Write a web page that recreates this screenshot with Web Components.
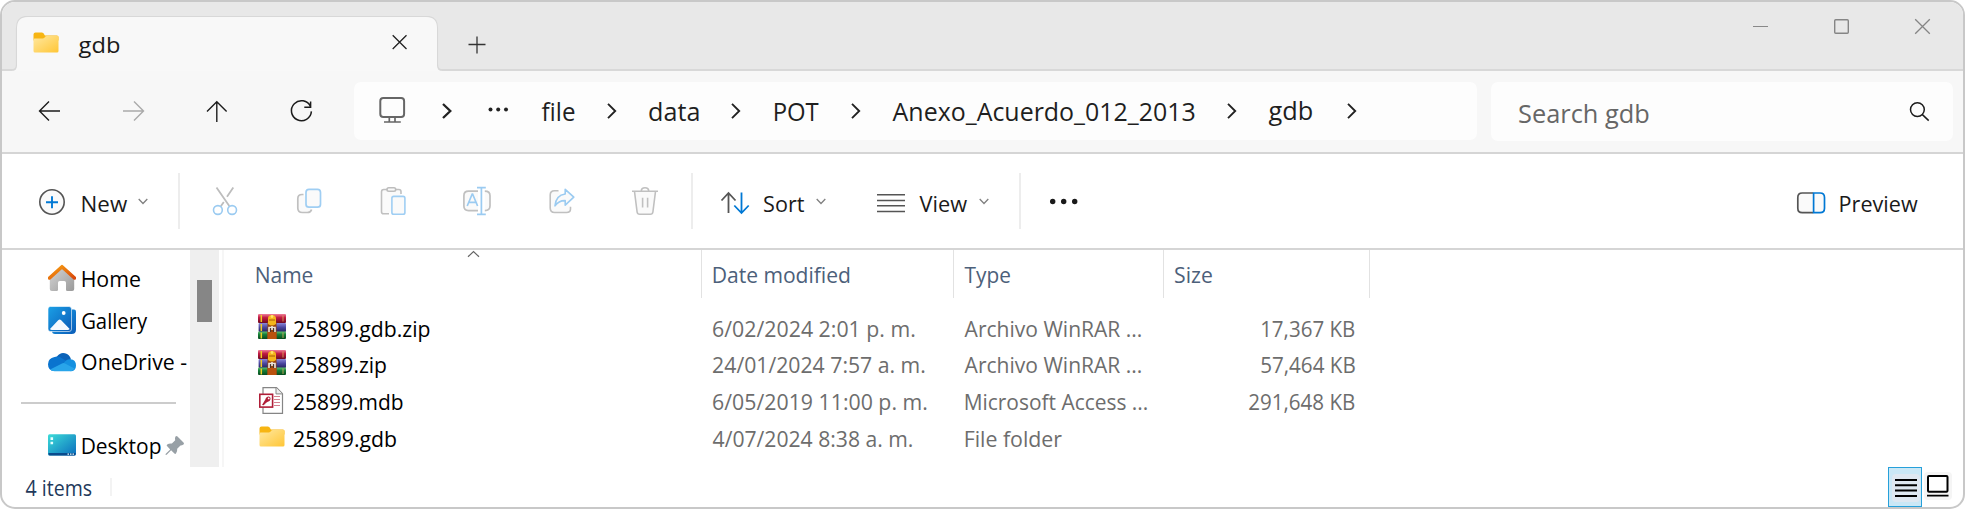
<!DOCTYPE html>
<html lang="en">
<head>
<meta charset="utf-8">
<title>gdb - File Explorer</title>
<style>
  html, body { margin: 0; background: #fff; }
  body { font-family: "Open Sans", "Noto Sans", sans-serif; overflow: hidden; }
</style>
</head>
<body>
<file-explorer></file-explorer>
<script>
const define = (name, css, html, extra) => {
  const tpl = document.createElement('template');
  tpl.innerHTML = `<style>${css}</style>${html}`;
  customElements.define(name, class extends HTMLElement {
    connectedCallback() {
      if (this.shadowRoot) return;
      this.attachShadow({ mode: 'open' }).append(tpl.content.cloneNode(true));
      if (extra) extra.call(this, this.shadowRoot);
    }
  });
};

/* Each icon: viewBox followed by its drawing. */
const folder = (x, y) => `
  <path d="M${x} ${y+2}q0-2 2-2h6.2q1 0 1.8.8l1.4 2.2H${x+23.5}q1.5 0 1.5 1.5V${y+8}H${x}z" fill="#f7b512"/>
  <path d="M${x} ${y+7.2}q0-1.2 1.2-1.2h8q1 0 1.700-.8l1-1.200q.5-.5 1.400-.5H${x+23.800}q1.200 0 1.200 1.200V${y+18.500}q0 1.500-1.500 1.500H${x+1.500}q-1.500 0-1.500-1.500z" fill="url(#f)"/>
  <defs><linearGradient id="f" x1="0" y1="0" x2="1" y2="1"><stop offset="0" stop-color="#ffe8a0"/><stop offset="1" stop-color="#ffc636"/></linearGradient></defs>`;
const ICONS = {
  folder: ['0 0 26 21', folder(.5, .5)],
  tabClose: ['391 35 17 17', '<path d="M392.700 36.200l13.800 13.800M406.500 36.200l-13.800 13.800" stroke="#222" stroke-width="1.300"/>'],
  plus: ['467 35 20 20', '<path d="M468.500 44.500h17M477 36.500v17" stroke="#333" stroke-width="1.300"/>'],
  min: ['1753 18 15 17', '<path d="M1753 26.500h15" stroke="#888" stroke-width="1.200"/>'],
  max: ['1834 18 15 17', '<rect x="1834.700" y="19.700" width="13.600" height="13.600" rx="1" fill="none" stroke="#858585" stroke-width="1.400"/>'],
  close: ['1914 18 17 17', '<path d="M1915.200 19.200l14.600 14.600M1929.800 19.200l-14.600 14.600" stroke="#858585" stroke-width="1.300"/>'],
  back: ['36 82 28 58', '<path d="M60 111H39.700M49 101.500l-9.500 9.500 9.500 9.600" stroke="#1c1c1c" stroke-width="1.400" fill="none"/>'],
  forward: ['120 82 28 58', '<path d="M123 111h20.300M134 101.500l9.500 9.500-9.500 9.600" stroke="#aaa" stroke-width="1.400" fill="none"/>'],
  up: ['203 82 28 58', '<path d="M216.800 122v-20.300M207 111.500l9.800-9.700 9.800 9.700" stroke="#1c1c1c" stroke-width="1.400" fill="none"/>'],
  refresh: ['288 82 28 58', '<path d="M310.500 106.500A10 10 0 1 0 311.400 111.400M310.600 101.400v5.800h-6.300" stroke="#1c1c1c" stroke-width="1.500" fill="none"/>'],
  monitor: ['378 82 28 58', '<g fill="none" stroke="#666" stroke-width="2"><rect x="380.300" y="97.900" width="23.800" height="19.200" rx="3"/><path d="M389.300 117v4.500M395 117v4.500M384 122h16.800" stroke-width="1.700"/></g>'],
  crumbBold: ['0 0 10 16', '<path d="M1 1l7.300 7L1 15" stroke="#222" stroke-width="2.300" fill="none"/>'],
  crumb: ['0 0 10 16', '<path d="M1 .8L8.200 8 1 15.200" stroke="#222" stroke-width="1.900" fill="none"/>'],
  more: ['487 82 22 58', '<g fill="#222"><circle cx="490.500" cy="109.500" r="2"/><circle cx="498.200" cy="109.500" r="2"/><circle cx="506" cy="109.500" r="2"/></g>'],
  search: ['1908 82 24 59', '<g fill="none" stroke="#1c1c1c" stroke-width="1.500"><circle cx="1917.400" cy="109.600" r="6.900"/><path d="M1922.400 114.600l6.300 6"/></g>'],
  add: ['38 181 28 40', '<circle cx="52" cy="202" r="12.200" fill="#fafafa" stroke="#555" stroke-width="1.600"/><path d="M46 202.200h12M52 196.200v12" stroke="#0078d4" stroke-width="1.900"/>'],
  chev: ['0 0 10 7', '<path d="M.7 1l4.300 4.500L9.300 1" stroke="#808080" stroke-width="1.300" fill="none"/>'],
  cut: ['211 181 28 40', '<g fill="none" stroke-width="1.600"><path d="M216.500 187.500L229.300 206M233.300 187.500l-6.300 9.300M223.800 202l-3 4.300" stroke="#bdbdbd" stroke-width="1.800"/><circle cx="217.900" cy="210" r="4.400" stroke="#9bcbf1"/><circle cx="232.100" cy="210" r="4.400" stroke="#9bcbf1"/></g>'],
  copy: ['295 181 28 40', '<g stroke-width="1.700" fill="#fafafa"><path d="M303.500 194.500h-1.500q-4.200 0-4.200 4.200v9.300q0 4.500 4.500 4.500h5q3.500 0 4.300-3" stroke="#c0c0c0"/><rect x="306" y="189.400" width="14.500" height="17.800" rx="3" stroke="#9fcef3"/></g>'],
  paste: ['379 181 28 40', '<g stroke-width="1.600" fill="#fafafa"><path d="M389 213.800h-5.500q-2 0-2-2v-20q0-2.300 2.300-2.300h15q2.200 0 2.200 2.200v2.300" stroke="#c0c0c0"/><rect x="387" y="187.700" width="8.700" height="3.500" rx="1.700" stroke="#bdbdbd"/><rect x="391.900" y="196.400" width="13" height="17.800" rx="1.800" stroke="#9fcef3"/></g>'],
  rename: ['462 181 30 40', '<g stroke-width="1.700" fill="none"><path d="M478 191.200h-9.500q-4.600 0-4.600 4.600v10.200q0 4.600 4.600 4.600h9.500M484.800 191.200q5.200 0 5.200 4.600v10.200q0 4.600-5.200 4.600" stroke="#c0c0c0" fill="#fafafa"/><path d="M467.200 206l5-12h.4l5 12M469 202.300h6.800" stroke="#9bcbf1"/><path d="M477 187.700h8.800M477 214.300h8.800M481.400 187.700v26.600" stroke="#9bcbf1"/></g>'],
  share: ['547 181 30 40', '<g stroke-width="1.600" fill="#fafafa" stroke-linejoin="round"><path d="M558.500 190.700h-4q-4.300 0-4.300 4.300v13q0 4.500 4.500 4.500h11.800q4 0 4-3.500v-2.200" stroke="#c0c0c0"/><path d="M565.200 189.300l8.600 7.900-8.600 7.900v-4.500q-6.500-.2-10.200 5.200 1-10.700 10.200-11.800z" stroke="#9bcbf1"/></g>'],
  trash: ['630 181 30 40', '<g stroke-width="1.600" fill="#fafafa" stroke="#c0c0c0"><path d="M634.500 191.500l2.600 20.500q.3 2.300 2.600 2.300h10.600q2.300 0 2.600-2.300l2.600-20.500"/><path d="M632 191.300h26M641.300 191q0-3.300 3.700-3.300t3.700 3.300M642.600 197.800v9.800M647.600 197.800v9.800" fill="none"/></g>'],
  sort: ['719 181 32 40', '<g stroke-width="1.800" fill="none"><path d="M728.500 213v-20M721.500 200.500l7-7.500 7 7.500" stroke="#555"/><path d="M741.500 192.500v20M734.300 205.500l7.200 7.500 7.200-7.500" stroke="#0078d4"/></g>'],
  view: ['876 181 30 40', '<path d="M877 194.700h28M877 200.500h28M877 205.700h28M877 211.500h28" stroke="#555" stroke-width="1.500"/>'],
  dots: ['1048 181 32 40', '<g fill="#1a1a1a"><circle cx="1052.700" cy="201.500" r="2.700"/><circle cx="1063.700" cy="201.500" r="2.700"/><circle cx="1074.700" cy="201.500" r="2.700"/></g>'],
  preview: ['1795 181 32 40', '<g fill="#fafafa" stroke-width="1.700"><path d="M1813.200 212.700h-11q-4.400 0-4.400-4.400v-10.900q0-4.400 4.400-4.400h11" stroke="#555"/><path d="M1813.600 193h6.500q4.400 0 4.400 4.400v10.900q0 4.400-4.400 4.400h-6.500z" stroke="#0078d4"/></g>'],
  home: ['48 264 28 28', '<defs><linearGradient id="h" x2="1" y2="1"><stop stop-color="#d8d8d8"/><stop offset="1" stop-color="#9a9a9a"/></linearGradient><linearGradient id="r" x2="1" y2="1"><stop stop-color="#f8a012"/><stop offset="1" stop-color="#d9480b"/></linearGradient></defs><path d="M49.800 276l12.200-10.500 12.200 10.500v13q0 2-2 2h-5q-1.200 0-1.200-1.200v-7q0-1.800-1.800-1.800h-4.400q-1.800 0-1.800 1.800v7q0 1.200-1.200 1.200h-5q-2 0-2-2z" fill="url(#h)"/><path d="M49.500 278L62 266.700 74.500 278" fill="none" stroke="url(#r)" stroke-width="3.500" stroke-linecap="round" stroke-linejoin="round"/>'],
  gallery: ['48 305.500 28 28', '<defs><linearGradient id="g" x2="1" y2="1"><stop stop-color="#1ba0e6"/><stop offset="1" stop-color="#0a5cb8"/></linearGradient></defs><path d="M70 309h4q2 0 2 2v18q0 4.500-4.500 4.500H55q-3 0-3-3z" fill="url(#g)"/><rect x="48" y="306" width="23.500" height="25" rx="2.500" fill="url(#g)" stroke="#fff" stroke-width=".6"/><path d="M50 328.500l8.200-8.800q1.500-1.600 3 0l8.500 8.800q-.7 1-2 1H52q-1.500 0-2-1z" fill="#f4faff"/><circle cx="63.700" cy="312.500" r="1.900" fill="#fff"/>'],
  onedrive: ['48 346.500 28 28', '<path d="M57 355q3.200-4.500 8-3.300 4.500 1 6 6l-6 5-12-4z" fill="#0b62b8"/><path d="M54.500 355.500q4-1.200 7 1l8 5-14 8h-1.500q-6-.5-6-6.800 0-6 6.500-7.200z" fill="#0a74cf"/><path d="M63 363q2.500-5.500 7.500-5.300 5.500.6 5.500 6.200 0 5.600-5.500 5.900z" fill="#1590e0"/><path d="M50 368l12-6q1.500-.8 3 .1l9.500 5q-1.500 2.700-4.500 2.700H54.500q-3 0-4.500-1.800z" fill="#29a5ea"/>'],
  desktop: ['48 431 28 28', '<defs><linearGradient id="d" x2="1" y2="1"><stop stop-color="#3cdcd8"/><stop offset="1" stop-color="#0b6dbd"/></linearGradient></defs><rect x="48" y="434.300" width="28" height="21.300" rx="1.500" fill="url(#d)"/><path d="M48.500 453h27v1q0 1.500-1.500 1.500H50q-1.500 0-1.500-1.500z" fill="#0a4b8c"/><path d="M50.500 437.300h2.600v2.600h-2.600zM50.500 441.700h2.600v2.600h-2.600zM67.500 453.500h1.500v1.300h-1.500zM70 453.500h1.500v1.300H70zM72.500 453.500h1.500v1.300h-1.500z" fill="#e6ffff"/>'],
  pin: ['165 435 20 21', '<path d="M175.500 436.500q1-1 2 0l6 6q1 1 0 2-1.500 1-3 1l-3.300 3.300q.3 3-1.200 4.800-.8.800-1.600 0l-3.300-3.300-4.400 4.400-1.200.3.300-1.200 4.400-4.400-3.200-3.300q-.8-.8.200-1.500 1.700-1.400 4.700-1.100l3.300-3.300q-.7-2.300.3-3.700z" fill="#98a0a6"/>'],
  sortCaret: ['0 0 13 8', '<path d="M1 6.800l5.500-5.300L12 6.800" stroke="#666" stroke-width="1.200" fill="none"/>'],
  rar: ['0 0 28 25', `<defs><linearGradient id="a" x2="0" y2="1"><stop stop-color="#f0809a"/><stop offset=".4" stop-color="#c11a42"/><stop offset="1" stop-color="#6e0a20"/></linearGradient><linearGradient id="b" x2="0" y2="1"><stop stop-color="#8a86d8"/><stop offset=".5" stop-color="#4a469e"/><stop offset="1" stop-color="#25225e"/></linearGradient><linearGradient id="c" x2="0" y2="1"><stop stop-color="#5fc070"/><stop offset=".4" stop-color="#17803a"/><stop offset="1" stop-color="#064a1c"/></linearGradient></defs>
    <rect width="28" height="9" rx="1" fill="url(#a)"/><rect x=".6" y="9" width="27.400" height="9" rx="1" fill="url(#b)"/><rect y="17.500" width="28" height="7.500" rx="1" fill="url(#c)"/>
    <path d="M3.300 1v7M3.300 10v7M3.300 18.500v6" stroke="#f0cc25" stroke-width="1.500"/><path d="M25 1.500v6M25 18.500v5.500" stroke="#e0b060" stroke-width=".8"/>
    <rect x="9.500" y="8" width="9" height="17" fill="#96420f"/><rect x="9.500" y="18" width="9" height="7" fill="#b9520f"/><path d="M10 10V4.500q0-3.500 4-3.500t4 3.500V10q-4 3-8 0z" fill="#f5b51c"/><circle cx="14" cy="2.500" r="1.400" fill="#ffe169"/><path d="M11 6h6" stroke="#a85a08" stroke-width="1"/><path d="M11 18v-4.500h6V18M14 12v4" stroke="#e9e4e0" stroke-width="1.600" fill="none"/><path d="M12.500 14v4M15.500 14v4" stroke="#333" stroke-width=".8"/>`],
  mdb: ['0 0 25 27', '<path d="M4 .7h13.500l6 6v19.600H4z" fill="#fff" stroke="#858585" stroke-width="1.200"/><path d="M17 .7v6.200h6.500" fill="#eee" stroke="#858585" stroke-width="1"/><path d="M15 9.500h6M15 12.500h6M15 15.500h6M15 18.500h6" stroke="#d4808e" stroke-width="1.100"/><rect x=".8" y="7.300" width="12.800" height="12.800" fill="#fff" stroke="#b01e38" stroke-width="1.600"/><path d="M3 18l3.200-5.200q.3-2.600 2.800-3.300 2.800-.2 2.500 2.700-.6 2.700-3.200 2.800l-1 .8-.7.3-.4 1.200-1.100.2-.3.700z" fill="#b01e38"/><circle cx="9.700" cy="11.400" r=".9" fill="#fff"/>'],
  details: ['1888 467 34 40', '<rect x="1892" y="474" width="28" height="28" rx="4" fill="#dfe8f1"/><path d="M1895 480h22M1895 485.200h22M1895 490.500h22M1895 496h22" stroke="#000" stroke-width="1.900"/>'],
  thumbs: ['1922 467 32 40', '<rect x="1924" y="472" width="28" height="28" rx="4" fill="#f5f5f5"/><rect x="1928" y="476" width="19.500" height="15.700" rx="1" fill="#fff" stroke="#000" stroke-width="2"/><path d="M1927 495.600h21.500" stroke="#000" stroke-width="1.800"/>'],
};

define('ui-icon', ':host{display:block;flex:none;line-height:0} svg{display:block}', '<svg xmlns="http://www.w3.org/2000/svg"></svg>', function (root) {
  const [box, body] = ICONS[this.getAttribute('name')];
  const [, , w, h] = box.split(' ');
  const svg = root.querySelector('svg');
  svg.setAttribute('viewBox', box);
  svg.setAttribute('width', w);
  svg.setAttribute('height', h);
  svg.innerHTML = body;
  this.style.marginLeft = (this.getAttribute('gap') || 0) + 'px';
});

/* One line of text whose glyphs span `w` pixels. */
const pen = document.createElement('canvas').getContext('2d');
define('ui-text', `
  :host{display:block;flex:none;height:32px;line-height:32px;white-space:pre}
  span{display:inline-block;transform-origin:0 50%}`, '<span><slot></slot></span>', function (root) {
  const size = +(this.getAttribute('size') || 22), w = +this.getAttribute('w');
  const weight = this.getAttribute('weight') || 400;
  pen.font = `${weight} ${size}px "Open Sans"`;
  const m = pen.measureText(this.textContent);
  const k = w / (m.actualBoundingBoxRight + m.actualBoundingBoxLeft);
  Object.assign(this.style, { fontSize: size + 'px', fontWeight: weight, width: w + 'px', marginLeft: (this.getAttribute('gap') || 0) + 'px' });
  root.querySelector('span').style.transform =
    `translate(${m.actualBoundingBoxLeft * k * .5 - .4}px, ${this.getAttribute('dy') || 0}px) scaleX(${k})`;
});

define('ui-rule', ':host{display:block;flex:none;width:2px;height:56px;background:#ededed}', '', function () {
  this.style.marginLeft = this.getAttribute('gap') + 'px';
});

define('title-bar', `
  :host{display:flex;box-sizing:border-box;height:69px;background:#e8e8e8;border-bottom:2px solid #d8d8d8;position:relative;color:#1a1a1a}
  .shape{position:absolute;left:0;top:14px}
  .tab{position:relative;display:flex;align-items:center;box-sizing:border-box;width:421px;height:53px;margin:14px 0 0 15px;padding-left:16px}
  .tab ui-icon{margin-top:-1px}
  .new{padding-top:33px;margin-left:29px}
  .win{display:flex;margin-left:auto;padding:16px 32px 0 0}`, `
  <svg class="shape" width="450" height="55" viewBox="2 16 450 55"><path d="M2 70.100h9q5.700 0 5.700-5.700V28q0-11.500 11.500-11.500h397.600q11.500 0 11.500 11.500v36.400q0 5.700 5.700 5.700H452" fill="none" stroke="#d8d8d8" stroke-width="1.600"/><path d="M2 71h9.500q5.500 0 5.500-5.500V28q0-11 11-11h398q11 0 11 11v37.500q0 5.500 5.500 5.500z" fill="#f8f8f8"/></svg>
  <div class="tab"><ui-icon name="folder"></ui-icon><ui-text w="41" gap="19.500" size="22.500" weight="500" dy="2">gdb</ui-text><ui-icon name="tabClose" gap="271.500"></ui-icon></div>
  <div class="new"><ui-icon name="plus"></ui-icon></div>
  <div class="win"><ui-icon name="min"></ui-icon><ui-icon name="max" gap="66"></ui-icon><ui-icon name="close" gap="65"></ui-icon></div>`);

define('nav-bar', `
  :host{display:flex;box-sizing:border-box;height:83px;padding:11px 10px 0 34px;background:#f7f7f7;border-bottom:2px solid #d5d5d5;color:#1f1f1f}
  .box{display:flex;align-items:center;box-sizing:border-box;background:#fdfdfd;border-radius:7px}
  .path{width:1123px;height:58px;margin-left:38px;padding-left:24px}
  .find{width:462px;height:59px;margin-left:14px;padding-left:28px;color:#666}`, `
  <ui-icon name="back"></ui-icon><ui-icon name="forward" gap="56"></ui-icon><ui-icon name="up" gap="55"></ui-icon><ui-icon name="refresh" gap="57"></ui-icon>
  <div class="box path">
    <ui-icon name="monitor"></ui-icon><ui-icon name="crumbBold" gap="36"></ui-icon><ui-icon name="more" gap="35"></ui-icon>
    <ui-text size="24.800" gap="33" w="33">file</ui-text><ui-icon name="crumb" gap="32"></ui-icon>
    <ui-text size="24.800" gap="32" w="49.500">data</ui-text><ui-icon name="crumb" gap="32.500"></ui-icon>
    <ui-text size="24.800" gap="32.500" w="44.500">POT</ui-text><ui-icon name="crumb" gap="33"></ui-icon>
    <ui-text size="24.800" gap="31.500" w="302">Anexo_Acuerdo_012_2013</ui-text><ui-icon name="crumb" gap="32.500"></ui-icon>
    <ui-text size="24.800" gap="32" w="43.500" dy="-0.700">gdb</ui-text><ui-icon name="crumb" gap="34.500"></ui-icon>
  </div>
  <div class="box find"><ui-text size="24.800" w="129.500" dy="0.500">Search gdb</ui-text><ui-icon name="search" gap="259.500"></ui-icon></div>`);

define('command-bar', `
  :host{display:flex;align-items:center;box-sizing:border-box;height:96px;padding-left:36px;background:#fff;border-bottom:2px solid #d5d5d5;color:#1a1a1a}
  .end{display:flex;align-items:center;margin-left:auto;padding-right:46px}`, `
  <ui-icon name="add"></ui-icon><ui-text gap="16" w="44.500" dy="2">New</ui-text><ui-icon name="chev" gap="11.500"></ui-icon>
  <ui-rule gap="30"></ui-rule>
  <ui-icon name="cut" gap="31"></ui-icon><ui-icon name="copy" gap="56"></ui-icon><ui-icon name="paste" gap="56"></ui-icon><ui-icon name="rename" gap="55"></ui-icon><ui-icon name="share" gap="55"></ui-icon><ui-icon name="trash" gap="53"></ui-icon>
  <ui-rule gap="31"></ui-rule>
  <ui-icon name="sort" gap="26"></ui-icon><ui-text gap="12.500" w="40.500" dy="2">Sort</ui-text><ui-icon name="chev" gap="12"></ui-icon>
  <ui-icon name="view" gap="50"></ui-icon><ui-text gap="13.500" w="47.500" dy="2">View</ui-text><ui-icon name="chev" gap="12"></ui-icon>
  <ui-rule gap="30"></ui-rule>
  <ui-icon name="dots" gap="27"></ui-icon>
  <div class="end"><ui-icon name="preview"></ui-icon><ui-text gap="13" w="77" dy="2">Preview</ui-text></div>`);

define('side-bar', `
  :host{display:flex;flex:none;width:222px;color:#000}
  .items{width:188px;padding-top:7px;box-sizing:border-box}
  .row{display:flex;align-items:center;height:42px;padding-left:46px}
  .line{height:2px;margin:20px 14px 20px 18.500px;background:#ccc}
  .track{width:29px;background:#efefef;padding-top:30px;box-sizing:border-box}
  .thumb{width:15px;height:41.500px;margin:0 7px;background:#868686}`, `
  <div class="items">
    <div class="row"><ui-icon name="home"></ui-icon><ui-text gap="6" w="58">Home</ui-text></div>
    <div class="row"><ui-icon name="gallery"></ui-icon><ui-text gap="6" w="66">Gallery</ui-text></div>
    <div class="row" style="height:41px"><ui-icon name="onedrive"></ui-icon><ui-text gap="6" w="105" dy="-1">OneDrive -</ui-text></div>
    <div class="line"></div>
    <div class="row"><ui-icon name="desktop"></ui-icon><ui-text gap="6" w="78.500">Desktop</ui-text><ui-icon name="pin" gap="4.500"></ui-icon></div>
  </div>
  <div class="track"><div class="thumb"></div></div>`);

define('file-row', `
  :host{display:grid;grid-template-columns:478px 252px 210px 206px;height:36.670px;color:#6d6d6d}
  div{display:flex;align-items:center}
  .name{color:#000;padding-left:34px}
  .ico{width:35.500px}
  .date{padding-left:10.500px}.type{padding-left:10.500px}
  .size{justify-content:flex-end;padding-right:15px}`, `
  <div class="name"><div class="ico"><slot name="icon"></slot></div><slot name="name"></slot></div>
  <div class="date"><slot name="date"></slot></div><div class="type"><slot name="type"></slot></div><div class="size"><slot name="size"></slot></div>`);

define('file-list', `
  :host{display:block;flex:1;border-left:2px solid #f6f6f6}
  .head{display:grid;grid-template-columns:478px 252px 210px 206px;height:48px;margin-bottom:12px;color:#4c607a}
  .head div{display:flex;align-items:center;position:relative;border-right:1px solid #e2e2e2;padding-left:11px}
  .head .first{padding-left:32px}
  .caret{position:absolute;left:243px;top:0}`, `
  <div class="head">
    <div class="first"><ui-text w="56.500">Name</ui-text><ui-icon class="caret" name="sortCaret"></ui-icon></div>
    <div><ui-text w="136">Date modified</ui-text></div><div><ui-text w="46">Type</ui-text></div><div><ui-text w="37.500">Size</ui-text></div>
  </div>
  <file-row><ui-icon slot="icon" name="rar" style="margin-top:-4px"></ui-icon><ui-text slot="name" w="136">25899.gdb.zip</ui-text><ui-text slot="date" w="202">6/02/2024 2:01 p. m.</ui-text><ui-text slot="type" w="177">Archivo WinRAR ...</ui-text><ui-text slot="size" w="94">17,367 KB</ui-text></file-row>
  <file-row><ui-icon slot="icon" name="rar" style="margin-top:-4px"></ui-icon><ui-text slot="name" w="92.500" dy="-1">25899.zip</ui-text><ui-text slot="date" w="212" dy="-1">24/01/2024 7:57 a. m.</ui-text><ui-text slot="type" w="177" dy="-1">Archivo WinRAR ...</ui-text><ui-text slot="size" w="94.500" dy="-1">57,464 KB</ui-text></file-row>
  <file-row><ui-icon slot="icon" name="mdb" gap="1" style="margin-top:-3px"></ui-icon><ui-text slot="name" w="109" dy="-0.700">25899.mdb</ui-text><ui-text slot="date" w="214" dy="-0.700">6/05/2019 11:00 p. m.</ui-text><ui-text slot="type" w="182" dy="-0.700">Microsoft Access ...</ui-text><ui-text slot="size" w="106" dy="-0.700">291,648 KB</ui-text></file-row>
  <file-row><ui-icon slot="icon" name="folder" gap="1" style="margin-top:-4px"></ui-icon><ui-text slot="name" w="102.500">25899.gdb</ui-text><ui-text slot="date" w="200">4/07/2024 8:38 a. m.</ui-text><ui-text slot="type" w="96.500">File folder</ui-text></file-row>`);

define('status-bar', `
  :host{display:flex;align-items:center;height:40px;padding-left:24px;color:#1e395b}
  .sep{width:2px;height:18px;margin-left:17.500px;background:#f3f3f3}
  .views{display:flex;margin-left:auto;padding-right:9px}
  .on{box-sizing:border-box;width:34px;height:40px;border:1px solid #26a0da;background:#cbe8f6}
  .on ui-icon{margin:-1px}`, `
  <ui-text size="21" w="66.500" dy="1">4 items</ui-text><div class="sep"></div>
  <div class="views"><div class="on"><ui-icon name="details" gap="-1"></ui-icon></div><ui-icon name="thumbs"></ui-icon></div>`);

define('file-explorer', `
  :host{display:block;box-sizing:border-box;width:1965px;height:509px;border:2px solid #c8c8c8;border-radius:15px;overflow:hidden;background:#fff}
  .main{display:flex;height:217px}
  side-bar{margin-right:-2px}`, `
  <title-bar></title-bar><nav-bar></nav-bar><command-bar></command-bar>
  <div class="main"><side-bar></side-bar><file-list></file-list></div>
  <status-bar></status-bar>`);
</script>
</body>
</html>
